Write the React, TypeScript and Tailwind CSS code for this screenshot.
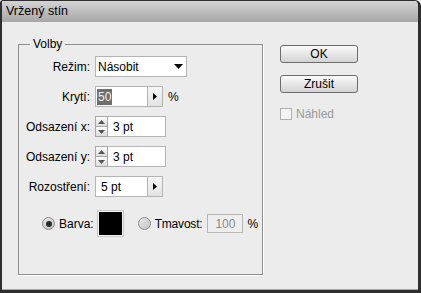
import React from 'react';

const font = { fontFamily: '"Liberation Sans", Arial, sans-serif' };

// small right-pointing arrow button next to the number fields
const SideArrow: React.FC = () => (
  <div className="flex h-full w-[15px] items-center justify-center border border-l-0 border-[#b4b4b4] bg-gradient-to-b from-[#f6f6f6] to-[#e2e2e2]">
    <svg width="4" height="7" viewBox="0 0 4 7">
      <path d="M0 0 L4 3.5 L0 7 Z" fill="#000" />
    </svg>
  </div>
);

const Spinner: React.FC = () => (
  <div className="flex h-full w-[13px] flex-col border border-[#a8a8a8] bg-[#f2f2f2]">
    <div className="flex flex-1 items-center justify-center border-b border-[#a8a8a8] bg-gradient-to-b from-[#fbfbfb] to-[#dcdcdc]">
      <svg width="7" height="4" viewBox="0 0 7 4">
        <path d="M0 4 L3.5 0 L7 4 Z" fill="#555" />
      </svg>
    </div>
    <div className="flex flex-1 items-center justify-center bg-gradient-to-b from-[#fbfbfb] to-[#dcdcdc]">
      <svg width="7" height="4" viewBox="0 0 7 4">
        <path d="M0 0 L3.5 4 L7 0 Z" fill="#555" />
      </svg>
    </div>
  </div>
);

const Row: React.FC<{ label: string; children: React.ReactNode }> = ({ label, children }) => (
  <div className="flex h-[21px] items-center">
    <div className="w-[73px] pr-[2px] text-right">{label}</div>
    <div className="ml-[3px] flex h-full items-center">{children}</div>
  </div>
);

const Radio: React.FC<{ checked?: boolean }> = ({ checked }) => (
  <div className="flex h-[13px] w-[13px] items-center justify-center rounded-full border border-[#8a8a8a] bg-gradient-to-br from-[#e8e8e8] to-[#c4c4c4]">
    {checked && <div className="h-[6px] w-[6px] rounded-full bg-[#2a2a2a]" />}
  </div>
);

const Button: React.FC<{ label: string }> = ({ label }) => (
  <div className="flex h-[18px] w-[78px] items-center justify-center rounded-[3px] border border-[#6c6c6c] bg-gradient-to-b from-[#fafafa] to-[#d4d4d4] text-black">
    {label}
  </div>
);

export default function App() {
  return (
    <div
      className="flex h-[293px] w-[421px] flex-col overflow-hidden rounded-tl-[3px] rounded-tr-[6px] border-t border-l-2 border-r-[3px] border-b-[3px] border-[#2e2e2e] bg-[#ececec] text-[12px] text-black"
      style={font}
    >
      <div className="flex h-[21px] shrink-0 items-center bg-gradient-to-b from-[#d4d4d4] to-[#a7a7a7] pl-[4px] text-[12.5px]">
        Vržený stín
      </div>

      <div className="flex flex-1 border-b border-[#a9a9a9]">
        <div className="pl-[16px] pt-[22px]">
          <div className="relative h-[231px] w-[245px] border border-[#8e8e8e] shadow-[1px_1px_0_#ffffff]">
            <span className="absolute left-[11px] top-[-8px] bg-[#ececec] px-[3px] leading-[14px]">Volby</span>

            <div className="flex flex-col gap-[9px] pt-[11px]">
              <Row label="Režim:">
                <div className="flex h-[21px] w-[92px] items-center justify-between border border-[#b4b4b4] bg-white pl-[2px] pr-[3px]">
                  <span>Násobit</span>
                  <svg width="9" height="5" viewBox="0 0 9 5">
                    <path d="M0 0 L9 0 L4.5 5 Z" fill="#000" />
                  </svg>
                </div>
              </Row>

              <Row label="Krytí:">
                <div className="flex h-[21px] w-[53px] items-center border border-[#b4b4b4] bg-white pl-[1px]">
                  <span className="bg-[#6e6e6e] px-[1px] leading-[16px] text-[#f0f0f0]">50</span>
                </div>
                <SideArrow />
                <span className="ml-[5px]">%</span>
              </Row>

              <Row label="Odsazení x:">
                <Spinner />
                <div className="flex h-[21px] w-[58px] items-center border border-l-0 border-[#b4b4b4] bg-white pl-[5px]">
                  3 pt
                </div>
              </Row>

              <Row label="Odsazení y:">
                <Spinner />
                <div className="flex h-[21px] w-[58px] items-center border border-l-0 border-[#b4b4b4] bg-white pl-[5px]">
                  3 pt
                </div>
              </Row>

              <Row label="Rozostření:">
                <div className="flex h-[21px] w-[53px] items-center border border-[#b4b4b4] bg-white pl-[5px]">
                  5 pt
                </div>
                <SideArrow />
              </Row>

              <div className="mt-[5px] flex h-[25px] items-center pl-[23px]">
                <Radio checked />
                <span className="ml-[4px]">Barva:</span>
                <div className="ml-[4px] h-[25px] w-[25px] border border-[#f4f4f4] bg-black shadow-[0_0_0_1px_#c8c8c8]" />
                <div className="ml-[15px]">
                  <Radio />
                </div>
                <span className="ml-[4px] tracking-[-0.2px]">Tmavost:</span>
                <div className="ml-[5px] flex h-[19px] w-[36px] items-center justify-center border border-[#b8b8b8] bg-[#eeeeee] text-[#8a8a8a]">
                  100
                </div>
                <span className="ml-[4px]">%</span>
              </div>
            </div>
          </div>
        </div>

        <div className="ml-[17px] flex flex-col pt-[23px]">
          <Button label="OK" />
          <div className="mt-[12px]">
            <Button label="Zrušit" />
          </div>
          <div className="mt-[12px] flex items-center text-[#9a9a9a]">
            <div className="h-[12px] w-[12px] border border-[#b0b0b0] bg-[#f4f4f4]" />
            <span className="ml-[4px]">Náhled</span>
          </div>
        </div>
      </div>
    </div>
  );
}
